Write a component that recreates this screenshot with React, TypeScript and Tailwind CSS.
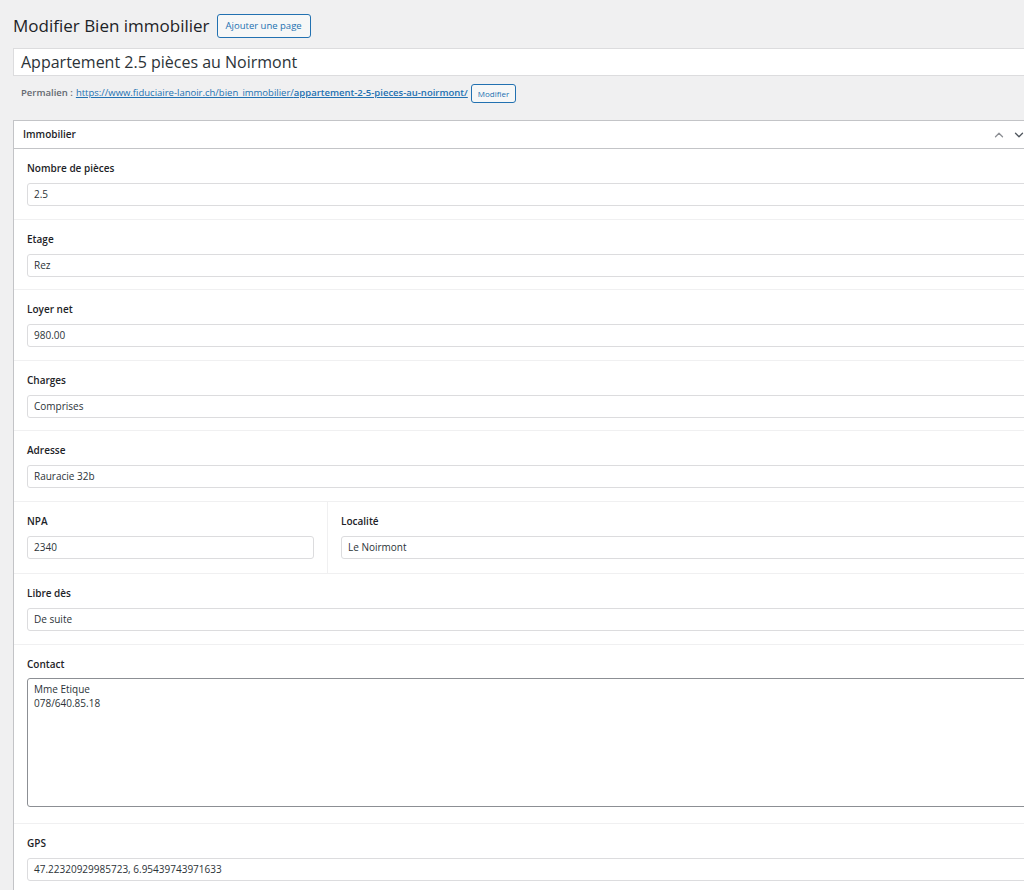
import { ChevronUp, ChevronDown } from "lucide-react";

const font = { fontFamily: '"Open Sans", "Noto Sans", sans-serif' };

function Field({ label, value, className = "" }: { label: string; value: string; className?: string }) {
    return (
        <div className={`px-[13px] pt-[12px] ${className}`}>
            <div className="h-[14px] leading-[14px] text-[10px] font-semibold text-[#1d2327]">{label}</div>
            <div className="mt-[8px] h-[23px] border border-[#dcdcde] rounded-[3px] bg-white px-[6px] flex items-center text-[10px] text-[#2c3338]">
                {value}
            </div>
        </div>
    );
}

export default function App() {
    return (
        <div className="w-[1024px] h-[890px] overflow-hidden bg-[#f0f0f1]" style={font}>
            <div className="w-[1040px] ml-[13px] pt-[14px]">
                <div className="flex items-center gap-[7px] h-[24px]">
                    <h1 className="text-[17px] leading-[24px] text-[#1d2327] font-normal">Modifier Bien immobilier</h1>
                    <button className="h-[24px] px-[8px] border border-[#2271b1] rounded-[3px] bg-[#f6f7f7] text-[#2271b1] text-[9.5px]">
                        Ajouter une page
                    </button>
                </div>

                <div className="mt-[10px] h-[28px] bg-white border border-[#dcdcde] flex items-center px-[7px] text-[16px] text-[#2c3338]">
                    Appartement 2.5 pièces au Noirmont
                </div>

                <div className="mt-[8px] h-[19px] flex items-center pl-[8px] text-[9.5px]">
                    <span className="font-semibold text-[#646970]">Permalien :</span>
                    <a className="ml-[3px] text-[#2271b1] underline">
                        https://www.fiduciaire-lanoir.ch/bien_immobilier/<span className="font-semibold">appartement-2-5-pieces-au-noirmont/</span>
                    </a>
                    <button className="ml-[3px] h-[19px] px-[6px] border border-[#2271b1] rounded-[3px] bg-[#f6f7f7] text-[#2271b1] text-[8px]">
                        Modifier
                    </button>
                </div>

                <div className="mt-[17px] bg-white border border-[#c3c4c7]">
                    <div className="h-[28px] border-b border-[#c3c4c7] flex items-center justify-between pl-[9px] pr-[26px]">
                        <span className="text-[10px] font-semibold text-[#1d2327]">Immobilier</span>
                        <div className="flex items-center gap-[6px]">
                            <ChevronUp size={14} strokeWidth={2.2} className="text-[#8c8f94]" />
                            <ChevronDown size={14} strokeWidth={2.2} className="text-[#50575e]" />
                        </div>
                    </div>

                    <Field label="Nombre de pièces" value="2.5" className="h-[71px] border-b border-[#f0f0f1]" />
                    <Field label="Etage" value="Rez" className="h-[70px] border-b border-[#f0f0f1]" />
                    <Field label="Loyer net" value="980.00" className="h-[71px] border-b border-[#f0f0f1]" />
                    <Field label="Charges" value="Comprises" className="h-[70px] border-b border-[#f0f0f1]" />
                    <Field label="Adresse" value="Rauracie 32b" className="h-[71px] border-b border-[#f0f0f1]" />

                    <div className="flex h-[72px] border-b border-[#f0f0f1]">
                        <Field label="NPA" value="2340" className="w-[314px] border-r border-[#f0f0f1]" />
                        <Field label="Localité" value="Le Noirmont" className="flex-1" />
                    </div>

                    <Field label="Libre dès" value="De suite" className="h-[71px] border-b border-[#f0f0f1]" />

                    <div className="h-[179px] px-[13px] pt-[12px] border-b border-[#f0f0f1]">
                        <div className="h-[14px] leading-[14px] text-[10px] font-semibold text-[#1d2327]">Contact</div>
                        <div className="mt-[7px] h-[129px] border border-[#8c8f94] rounded-[3px] bg-white px-[6px] py-[3px] text-[10px] leading-[14px] text-[#2c3338]">
                            <div>Mme Etique</div>
                            <div>078/640.85.18</div>
                        </div>
                    </div>

                    <Field label="GPS" value="47.22320929985723, 6.95439743971633" className="h-[70px]" />
                </div>
            </div>
        </div>
    );
}
